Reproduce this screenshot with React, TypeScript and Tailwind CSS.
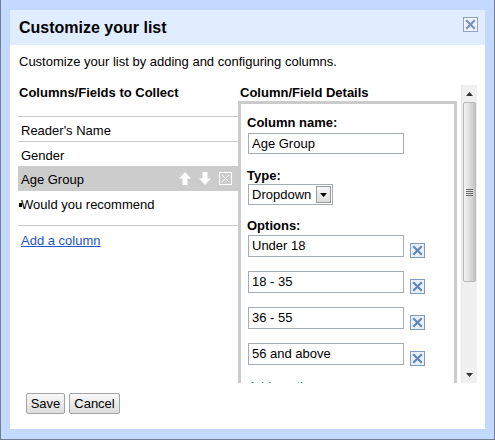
import React from "react";

const font = { fontFamily: '"Liberation Sans", Arial, sans-serif' };

function XBox({ stroke = "#5f86bd", border = "#7d9ac4", bg = "#eaf0f8" }: { stroke?: string; border?: string; bg?: string }) {
  return (
    <svg width="15" height="15" viewBox="0 0 15 15" className="block shrink-0">
      <rect x="0.5" y="0.5" width="14" height="14" fill={bg} stroke={border} />
      <path d="M4 4 L11 11 M11 4 L4 11" stroke={stroke} strokeWidth="2.2" strokeLinecap="square" />
    </svg>
  );
}

function UpArrow() {
  return (
    <svg width="12" height="13" viewBox="0 0 12 13" className="block">
      <path d="M6 0 L12 6.5 H8.5 V13 H3.5 V6.5 H0 Z" fill="#ffffff" />
    </svg>
  );
}

function DownArrow() {
  return (
    <svg width="12" height="13" viewBox="0 0 12 13" className="block">
      <path d="M6 13 L12 6.5 H8.5 V0 H3.5 V6.5 H0 Z" fill="#ffffff" />
    </svg>
  );
}

function WhiteXBox() {
  return (
    <svg width="13" height="13" viewBox="0 0 13 13" className="block">
      <rect x="0.5" y="0.5" width="12" height="12" fill="none" stroke="#ffffff" />
      <path d="M3 3 L10 10 M10 3 L3 10" stroke="#ffffff" strokeWidth="1" />
    </svg>
  );
}

function OptionRow({ value }: { value: string }) {
  return (
    <div className="flex items-end">
      <div className="w-[156px] h-[22px] border border-[#a5acb2] bg-white flex items-center pl-[3px] text-[13px] text-black">
        {value}
      </div>
      <div className="ml-[6px] mb-[-1px]">
        <XBox />
      </div>
    </div>
  );
}

function Scrollbar() {
  return (
    <div className="w-[16px] h-[298px] bg-[#f0f0f0] border-l border-[#e6e6e6] flex flex-col">
      <div className="h-[17px] flex items-center justify-center">
        <svg width="7" height="4" viewBox="0 0 7 4"><path d="M0 4 L3.5 0 L7 4 Z" fill="#333" /></svg>
      </div>
      <div className="h-[180px] mx-[1px] rounded-[2px] border border-[#b8b8b8] bg-gradient-to-r from-[#f4f4f4] via-[#dedede] to-[#c4c4c4] flex items-center justify-center">
        <div className="flex flex-col gap-[1px]">
          <div className="w-[7px] h-[1px] bg-[#707070]" />
          <div className="w-[7px] h-[1px] bg-[#707070]" />
          <div className="w-[7px] h-[1px] bg-[#707070]" />
          <div className="w-[7px] h-[1px] bg-[#707070]" />
        </div>
      </div>
      <div className="flex-1" />
      <div className="h-[17px] flex items-center justify-center">
        <svg width="7" height="4" viewBox="0 0 7 4"><path d="M0 0 L3.5 4 L7 0 Z" fill="#333" /></svg>
      </div>
    </div>
  );
}

export default function App() {
  return (
    <div style={font} className="w-[495px] h-[440px] bg-[#c3d9ff] border-l border-r border-b border-[#6f7f93] pt-[10px] pb-[10px] px-[9px] text-black">
      <div className="w-full h-full bg-white flex flex-col">
        {/* header */}
        <div className="h-[35px] bg-[#e0ecff] flex justify-between pl-[9px] pr-[7px]">
          <div className="text-[16px] font-bold leading-[35px]">Customize your list</div>
          <div className="mt-[7px]">
            <XBox stroke="#7c93b8" border="#8fa3c4" bg="#edf2fb" />
          </div>
        </div>

        {/* subtitle */}
        <div className="pl-[9px] mt-[9px] text-[13px] leading-[16px]">
          Customize your list by adding and configuring columns.
        </div>

        {/* columns */}
        <div className="flex mt-[15px] h-[298px]">
          {/* left */}
          <div className="w-[220px] ml-[8px] flex flex-col">
            <div className="pl-[1px] text-[13px] font-bold leading-[16px]">Columns/Fields to Collect</div>
            <div className="mt-[15px] border-t border-[#c8c8c8] text-[13px]">
              <div className="h-[25px] border-b border-[#c8c8c8] flex items-center pl-[3px] pt-[3px]">Reader's Name</div>
              <div className="h-[24px] flex items-center pl-[3px] pt-[4px]">Gender</div>
              <div className="h-[25px] bg-[#cccccc] flex items-center pl-[3px] pr-[6px]">
                <span className="flex-1 pt-[3px]">Age Group</span>
                <div className="flex items-center gap-[8px]">
                  <UpArrow />
                  <DownArrow />
                  <WhiteXBox />
                </div>
              </div>
              <div className="h-[25px] flex items-center pl-[1px] pt-[3px]">
                <span className="w-[3px] h-[4px] bg-black mr-[-1px]" />
                <span>Would you recommend</span>
              </div>
              <div className="h-[10px] border-b border-[#c8c8c8]" />
              <div className="mt-[7px] pl-[3px] leading-[16px]">
                <span className="text-[#2255cc] underline">Add a column</span>
              </div>
            </div>
          </div>

          {/* right */}
          <div className="flex">
            <div className="w-[219px] h-[298px] overflow-hidden">
              <div className="pl-[2px] text-[13px] font-bold leading-[16px]">Column/Field Details</div>
              <div className="border-t-[3px] border-l-[3px] border-r-[3px] border-[#cbcbcb] pl-[7px] pt-[11px] h-[400px] text-[13px]">
                <div className="font-bold leading-[16px] ml-[-1px]">Column name:</div>
                <div className="mt-[2px] w-[156px] h-[21px] border border-[#a5acb2] flex items-center pl-[3px]">Age Group</div>

                <div className="mt-[14px] font-bold leading-[16px] ml-[-1px]">Type:</div>
                <div className="w-[85px] h-[21px] border border-[#a5acb2] flex items-center justify-between pl-[3px] pr-[1px]">
                  <span>Dropdown</span>
                  <div className="w-[15px] h-[17px] border border-[#9a9a9a] bg-gradient-to-b from-[#f7f7f7] to-[#dcdcdc] flex items-center justify-center">
                    <svg width="7" height="4" viewBox="0 0 7 4"><path d="M0 0 L3.5 4 L7 0 Z" fill="#000" /></svg>
                  </div>
                </div>

                <div className="mt-[13px] font-bold leading-[16px] ml-[-1px]">Options:</div>
                <div className="mt-[1px] flex flex-col gap-[14px]">
                  <OptionRow value="Under 18" />
                  <OptionRow value="18 - 35" />
                  <OptionRow value="36 - 55" />
                  <OptionRow value="56 and above" />
                </div>
                <div className="mt-[14px] leading-[16px]">
                  <span className="text-[#2255cc]">Add another</span>
                </div>
              </div>
            </div>
            <div className="ml-[4px]">
              <Scrollbar />
            </div>
          </div>
        </div>

        {/* buttons */}
        <div className="flex gap-[4px] mt-[10px] ml-[16px]">
          <button className="h-[21px] w-[39px] text-[13px] border border-[#a3a3a3] rounded-[2px] bg-gradient-to-b from-[#f8f8f8] to-[#dddddd] leading-none">Save</button>
          <button className="h-[21px] w-[51px] text-[13px] border border-[#a3a3a3] rounded-[2px] bg-gradient-to-b from-[#f8f8f8] to-[#dddddd] leading-none">Cancel</button>
        </div>
      </div>
    </div>
  );
}
